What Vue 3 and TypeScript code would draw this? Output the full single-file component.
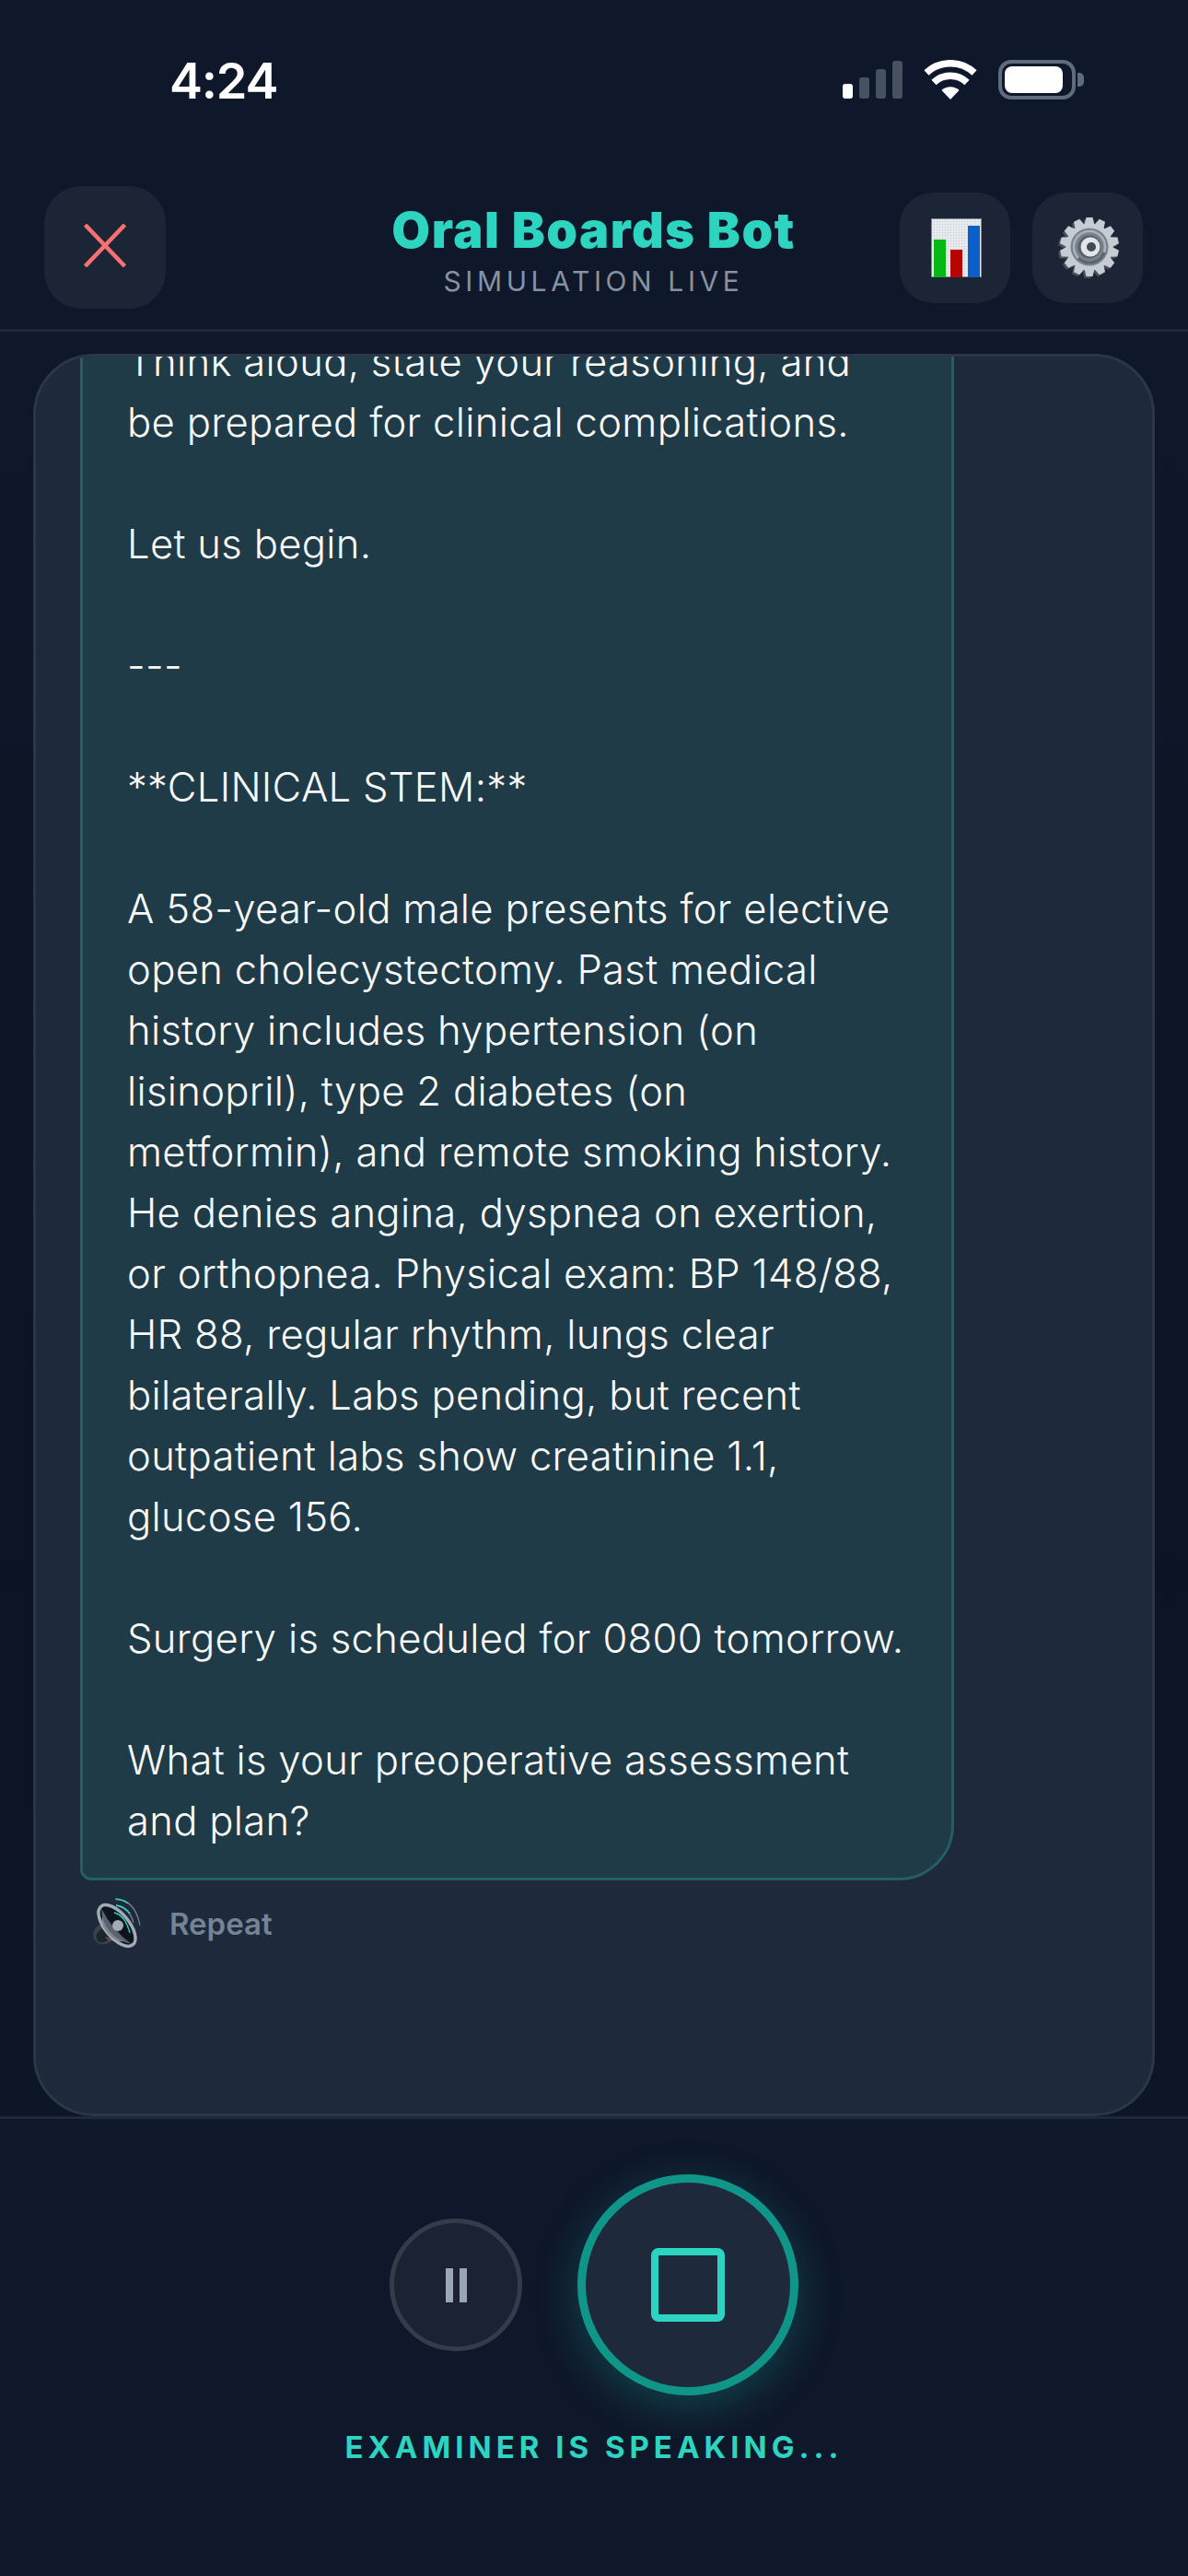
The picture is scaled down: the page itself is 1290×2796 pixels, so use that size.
<script setup lang="ts">
const signalBars = [
  { h: 16, on: true },
  { h: 23, on: false },
  { h: 32, on: false },
  { h: 41, on: false },
];

// line breaks follow the wrapping of the message bubble
const bubbleText = `Think aloud, state your reasoning, and
be prepared for clinical complications.

Let us begin.

---

**CLINICAL STEM:**

A 58-year-old male presents for elective
open cholecystectomy. Past medical
history includes hypertension (on
lisinopril), type 2 diabetes (on
metformin), and remote smoking history.
He denies angina, dyspnea on exertion,
or orthopnea. Physical exam: BP 148/88,
HR 88, regular rhythm, lungs clear
bilaterally. Labs pending, but recent
outpatient labs show creatinine 1.1,
glucose 156.

Surgery is scheduled for 0800 tomorrow.

What is your preoperative assessment
and plan?`;

const gearTeeth = Array.from({ length: 14 }, (_, i) => (i * 360) / 14);
</script>

<template>
  <div class="screen">
    <div class="status-bar">
      <span class="time">4:24</span>
      <div class="status-icons">
        <div class="signal">
          <i
            v-for="(bar, i) in signalBars"
            :key="i"
            :class="{ on: bar.on }"
            :style="{ height: bar.h + 'px' }"
          ></i>
        </div>
        <svg class="wifi" viewBox="0 0 58 43" width="58" height="43">
          <path d="M29 43 L19.5 33 A14 14 0 0 1 38.5 33 Z" fill="#fff" />
          <path d="M11 24.5 A26 26 0 0 1 47 24.5" fill="none" stroke="#fff" stroke-width="7.5" />
          <path d="M3 14 A38 38 0 0 1 55 14" fill="none" stroke="#fff" stroke-width="7.5" />
        </svg>
        <div class="battery">
          <div class="battery-body"><div class="battery-fill"></div></div>
          <div class="battery-nub"></div>
        </div>
      </div>
    </div>

    <header class="top-bar">
      <div class="top-left">
        <button class="icon-btn close-btn">
          <svg class="close-x" viewBox="0 0 46 47" width="46" height="47">
            <path d="M1.5 1 L44.5 46 M44.5 1 L1.5 46" stroke="#f87171" stroke-width="4.5" fill="none" />
          </svg>
        </button>
      </div>
      <div class="title-wrap">
        <h1 class="title">Oral Boards Bot</h1>
        <p class="subtitle">SIMULATION LIVE</p>
      </div>
      <div class="top-right">
        <button class="icon-btn">
          <svg class="chart" viewBox="0 0 55 64" width="55" height="64">
            <defs>
              <pattern id="chart-grid" width="3" height="3" patternUnits="userSpaceOnUse">
                <rect width="3" height="3" fill="#eceef1" />
                <path d="M0 0H3M0 0V3" stroke="#cfd3d9" stroke-width="1" />
              </pattern>
            </defs>
            <rect x="0.5" y="0.5" width="54" height="63" fill="url(#chart-grid)" stroke="#7c8794" />
            <rect x="3" y="23" width="13" height="41" fill="#06b814" />
            <rect x="21" y="34" width="13" height="30" fill="#b80303" />
            <rect x="40" y="8" width="13" height="56" fill="#0a60c8" />
          </svg>
        </button>
        <button class="icon-btn">
          <svg viewBox="0 0 72 72" width="72" height="72">
            <g transform="translate(4 1)">
              <g fill="#4d4f58" transform="translate(-2 2)">
                <circle cx="34" cy="34" r="25" />
                <polygon
                  v-for="a in gearTeeth"
                  :key="'s' + a"
                  points="28,12 30.5,2 37.5,2 40,12"
                  :transform="`rotate(${a} 34 34)`"
                />
              </g>
              <g fill="#c6ccd3">
                <circle cx="34" cy="34" r="25.5" />
                <polygon
                  v-for="a in gearTeeth"
                  :key="a"
                  points="28,12 30.5,2 37.5,2 40,12"
                  :transform="`rotate(${a} 34 34)`"
                />
              </g>
              <circle cx="34" cy="34" r="20.5" fill="#78828c" />
              <circle cx="34" cy="34" r="17" fill="none" stroke="#a9b1b9" stroke-width="2.5" />
              <path d="M22 46 A17 17 0 0 0 50 40" fill="none" stroke="#59636d" stroke-width="3" />
              <circle cx="34" cy="34" r="12.5" fill="#56606a" />
              <circle cx="35" cy="34" r="10.5" fill="#e1e5e9" />
              <circle cx="36" cy="34" r="5" fill="#414b55" />
            </g>
          </svg>
        </button>
      </div>
    </header>

    <main class="main">
      <section class="panel">
        <div class="bubble">{{ bubbleText }}</div>
        <div class="repeat">
          <svg class="speaker" viewBox="0 0 70 65" width="70" height="65">
            <ellipse cx="18" cy="44" rx="11" ry="12" transform="rotate(50 18 44)" fill="#39434d" />
            <ellipse cx="17" cy="46" rx="7" ry="8" transform="rotate(50 17 46)" fill="#1d242d" />
            <path d="M20 48 Q28 54 36 47" fill="none" stroke="#6e4f46" stroke-width="2" />
            <g transform="rotate(50 32 35)">
              <ellipse cx="32" cy="35" rx="27" ry="13" fill="#0e141d" stroke="#a3acb4" stroke-width="3.5" />
              <path d="M7 36 Q32 56 57 36 Q32 42 7 36 Z" fill="#596370" />
              <path d="M14 38 A 18 7 0 0 0 50 38 A 18 10 0 0 1 14 38 Z" fill="#7c8690" />
            </g>
            <circle cx="33" cy="35" r="6" fill="#a4abb2" />
            <path d="M30 6 Q52 7 57 35" fill="none" stroke="#76838f" stroke-width="1.3" />
            <path d="M31 6.5 Q38 6.5 44 11" fill="none" stroke="#2dd4bf" stroke-width="1.3" />
            <path d="M31 13 Q46 16 50 32" fill="none" stroke="#76838f" stroke-width="1.3" />
            <path d="M31 13 Q40 14 46 22" fill="none" stroke="#2dd4bf" stroke-width="1.5" />
            <path d="M29 21 Q41 24 46 43" fill="none" stroke="#2dd4bf" stroke-width="1.3" />
          </svg>
          <span class="repeat-label">Repeat</span>
        </div>
      </section>
    </main>

    <footer class="bottom-bar">
      <div class="controls">
        <button class="pause-btn"><i></i><i></i></button>
        <button class="stop-btn"><span class="stop-icon"></span></button>
      </div>
      <p class="speaking">EXAMINER IS SPEAKING...</p>
    </footer>
  </div>
</template>

<style>
html,
body {
  margin: 0;
  background: #0f172a;
}
</style>

<style scoped>
.screen {
  width: 1290px;
  height: 2796px;
  display: flex;
  flex-direction: column;
  background: #0f172a;
  font-family: Inter, "Noto Sans", sans-serif;
  overflow: hidden;
}

.status-bar {
  height: 180px;
  flex: none;
  display: flex;
  justify-content: space-between;
  padding: 56px 113px 0 184px;
  box-sizing: border-box;
  color: #fff;
}

.time {
  font-size: 54px;
  font-weight: 600;
  line-height: 63px;
  letter-spacing: -1.2px;
}

.status-icons {
  display: flex;
  align-items: flex-start;
  gap: 23px;
  padding-top: 9px;
}

.signal {
  display: flex;
  align-items: flex-end;
  gap: 7px;
  height: 42px;
}

.signal i {
  width: 11px;
  border-radius: 3px;
  background: #475260;
}

.signal i.on {
  background: #fff;
}

.battery {
  display: flex;
  align-items: center;
  gap: 2px;
}

.battery-body {
  width: 84px;
  height: 43px;
  box-sizing: border-box;
  border: 4px solid #5f6c7b;
  border-radius: 14px;
  padding: 3px 10px 3px 3px;
}

.battery-fill {
  height: 100%;
  border-radius: 8px;
  background: #fff;
}

.battery-nub {
  width: 7px;
  height: 15px;
  border-radius: 0 5px 5px 0;
  background: #5f6c7b;
}

.top-bar {
  height: 180px;
  flex: none;
  display: grid;
  grid-template-columns: 1fr auto 1fr;
  align-items: center;
  padding: 0 49px 0 48px;
  box-sizing: border-box;
  border-bottom: 3px solid #1e293b;
}

.top-left {
  display: flex;
}

.top-right {
  display: flex;
  justify-content: flex-end;
  gap: 24px;
}

.icon-btn {
  width: 120px;
  height: 120px;
  padding: 0;
  border: 0;
  border-radius: 36px;
  background: #1b2535;
  display: flex;
  align-items: center;
  justify-content: center;
}

.close-btn {
  width: 132px;
  height: 133px;
  border-radius: 40px;
}

.close-x {
  margin-bottom: 4px;
}

.chart {
  margin-left: 2px;
}

.title-wrap {
  text-align: center;
  padding-top: 3px;
}

.title {
  margin: 0;
  font-size: 54px;
  font-weight: 900;
  line-height: 64px;
  letter-spacing: 1.5px;
  color: #2dd4bf;
}

.subtitle {
  margin: 5px 0 0;
  font-size: 30px;
  line-height: 36px;
  letter-spacing: 4.6px;
  color: #8592a3;
}

.main {
  flex: 1;
  min-height: 0;
  display: flex;
  padding: 24px 36px 0;
  background: linear-gradient(#0f172a, #0b1424 70%, #0d1627);
}

.panel {
  flex: 1;
  min-height: 0;
  display: flex;
  flex-direction: column;
  justify-content: flex-end;
  overflow: hidden;
  padding: 0 48px 174px;
  box-sizing: border-box;
  background: #1e293b;
  border: 3px solid #2b3747;
  border-radius: 66px;
}

.bubble {
  flex: none;
  width: 949px;
  box-sizing: border-box;
  padding: 48px 30px 28px 48px;
  white-space: pre-line;
  font-size: 43.6px;
  font-weight: 360;
  letter-spacing: 0.3px;
  line-height: 66px;
  color: #f8fafc;
  background: #1f3b48;
  border: 3px solid #245e66;
  border-radius: 60px 60px 60px 12px;
}

.repeat {
  flex: none;
  display: flex;
  align-items: center;
  gap: 19px;
  margin-top: 14px;
  padding-left: 8px;
}

.repeat-label {
  font-size: 33px;
  font-weight: 600;
  color: #748494;
}

.bottom-bar {
  height: 499px;
  flex: none;
  box-sizing: border-box;
  border-top: 3px solid #1e293b;
  padding-top: 60px;
  display: flex;
  flex-direction: column;
  align-items: center;
}

.controls {
  display: flex;
  align-items: center;
  gap: 60px;
}

.pause-btn {
  width: 144px;
  height: 144px;
  box-sizing: border-box;
  padding: 0;
  border: 5px solid #333c4b;
  border-radius: 50%;
  background: #1b2232;
  display: flex;
  align-items: center;
  justify-content: center;
  gap: 7px;
}

.pause-btn i {
  width: 8px;
  height: 37px;
  background: #9aa6b2;
}

.stop-btn {
  width: 240px;
  height: 240px;
  box-sizing: border-box;
  padding: 0;
  border: 9px solid #0f9688;
  border-radius: 50%;
  background: #1e293b;
  box-shadow: 0 12px 48px rgba(20, 184, 166, 0.28);
  display: flex;
  align-items: center;
  justify-content: center;
}

.stop-icon {
  width: 80px;
  height: 80px;
  box-sizing: border-box;
  border: 8px solid #2dd4bf;
  border-radius: 8px;
}

.speaking {
  margin: 36px 0 0;
  font-size: 33px;
  line-height: 40px;
  font-weight: 700;
  letter-spacing: 5px;
  color: #2dd4bf;
}
</style>
